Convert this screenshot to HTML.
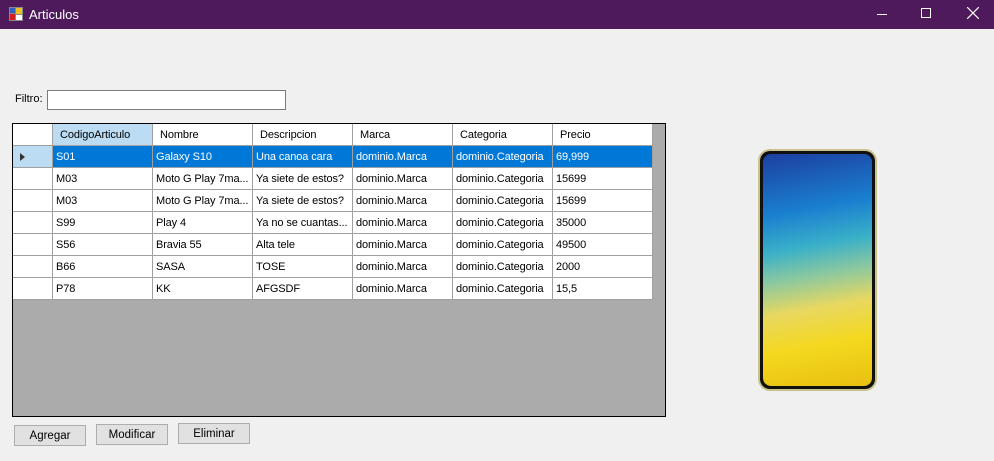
<!DOCTYPE html>
<html><head><style>
*{margin:0;padding:0;box-sizing:border-box}
body{width:994px;height:461px;background:#f0f0f0;font-family:"Liberation Sans",sans-serif;font-size:11px;position:relative;overflow:hidden;color:#000}
.tb{position:absolute;left:0;top:0;width:994px;height:29px;background:#4f1a5b;color:#fff}
.tb .t{position:absolute;left:29px;top:7px;font-size:13px}
.abs{position:absolute}
.grid{position:absolute;left:12px;top:123px;width:654px;height:294px;border:1px solid #000;background:#ababab}
.c{position:absolute;height:22px;line-height:22px;padding-left:3px;background:#fff;border-right:1px solid #a0a0a0;border-bottom:1px solid #a0a0a0;white-space:nowrap;overflow:hidden;letter-spacing:-0.1px}
.sel{background:#0078d7;color:#fff}
.btn{position:absolute;width:72px;height:21px;border:1px solid #adadad;background:#e1e1e1;text-align:center;line-height:20px;font-size:11.5px}
</style></head><body>
<div class="tb">
<svg class="abs" style="left:9px;top:7px" width="14" height="14"><rect x="0" y="0" width="14" height="14" fill="#888"/><rect x="1" y="1" width="5" height="5" fill="#3060c0"/><rect x="7" y="1" width="6" height="6" fill="#f0c020"/><rect x="1" y="7" width="5" height="6" fill="#d02020"/><rect x="7" y="8" width="6" height="5" fill="#fff"/></svg>
<div class="t">Articulos</div>
<div class="abs" style="left:877px;top:14px;width:10px;height:1px;background:#fff"></div>
<div class="abs" style="left:921px;top:8px;width:10px;height:10px;border:1px solid #fff"></div>
<svg class="abs" style="left:967px;top:7px" width="12" height="12"><path d="M0 0L12 12M12 0L0 12" stroke="#fff" stroke-width="1.2"/></svg>
</div>
<div class="abs" style="left:15px;top:93px">Filtro:</div>
<div class="abs" style="left:47px;top:90px;width:239px;height:20px;border:1px solid #7a7a7a;background:#fff"></div>
<div class="grid" id="g"></div>
<div class="btn" style="left:14px;top:425px">Agregar</div>
<div class="btn" style="left:96px;top:424px">Modificar</div>
<div class="btn" style="left:178px;top:423px">Eliminar</div>
<div class="abs" style="left:758px;top:149px;width:119px;height:242px;border-radius:12px;background:#c9c28a;padding:2px">
<div style="width:100%;height:100%;border-radius:10px;background:#111;padding:3px">
<div style="width:100%;height:100%;border-radius:8px;background:linear-gradient(170deg,#1c3fa0 0%,#1a7fd0 25%,#3ab0c8 40%,#8cc8a0 52%,#e8d860 65%,#f4d820 80%,#e8c010 100%)"></div></div></div>
<script>
var g=document.getElementById('g');
var H=['CodigoArticulo','Nombre','Descripcion','Marca','Categoria','Precio'];
var R=[['S01','Galaxy S10','Una canoa cara','dominio.Marca','dominio.Categoria','69,999'],
['M03','Moto G Play 7ma...','Ya siete de estos?','dominio.Marca','dominio.Categoria','15699'],
['M03','Moto G Play 7ma...','Ya siete de estos?','dominio.Marca','dominio.Categoria','15699'],
['S99','Play 4','Ya no se cuantas...','dominio.Marca','dominio.Categoria','35000'],
['S56','Bravia 55','Alta tele','dominio.Marca','dominio.Categoria','49500'],
['B66','SASA','TOSE','dominio.Marca','dominio.Categoria','2000'],
['P78','KK','AFGSDF','dominio.Marca','dominio.Categoria','15,5']];
var h='';
h+='<div class="c" style="left:0;top:0;width:40px"></div>';
for(var i=0;i<6;i++)h+='<div class="c" style="left:'+(40+i*100)+'px;top:0;width:100px;padding-left:7px;'+(i==0?'background:#bcdcf4':'')+'">'+H[i]+'</div>';
for(var r=0;r<7;r++){var t=22+r*22;
h+='<div class="c" style="left:0;top:'+t+'px;width:40px;'+(r==0?'background:#bcdcf4':'')+'">'+(r==0?'<svg width="8" height="10" style="margin:6px 0 0 3px;display:block"><path d="M1 1L6 5L1 9Z" fill="#333"/></svg>':'')+'</div>';
for(var i=0;i<6;i++)h+='<div class="c'+(r==0?' sel':'')+'" style="left:'+(40+i*100)+'px;top:'+t+'px;width:100px">'+R[r][i]+'</div>';}
g.innerHTML=h;
</script>
</body></html>
